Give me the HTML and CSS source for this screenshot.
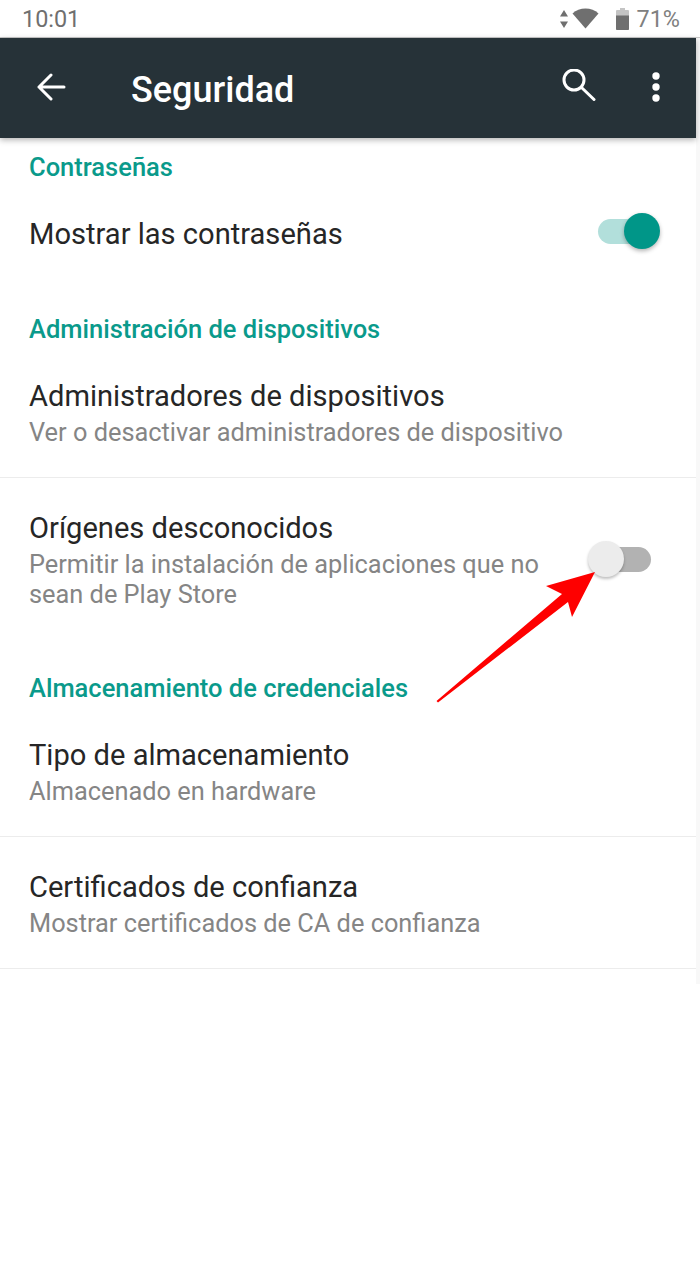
FILE: index.html
```html
<!DOCTYPE html>
<html lang="es">
<head>
<meta charset="utf-8">
<title>Seguridad</title>
<link rel="stylesheet" href="styles.css">
</head>
<body>
<div class="screen">
  <header class="statusbar">
    <span class="time">10:01</span>
    <div class="status-right">
      <svg class="ic-data" width="10" height="18" viewBox="0 0 10 18"><path d="M5 0l4 6.500H1zM5 18l-4-6.500h8z" fill="#6f6f6f"/></svg>
      <svg class="ic-wifi" width="27" height="21" viewBox="0 0 27 21"><path d="M13.500 20.500L.5 5.500C4 2.300 8.500.5 13.500.5s9.500 1.800 13 5z" fill="#6f6f6f"/></svg>
      <svg class="ic-batt" width="13" height="22" viewBox="0 0 13 22"><path d="M4 0h5v2h3a1 1 0 0 1 1 1v18a1 1 0 0 1-1 1H1a1 1 0 0 1-1-1V3a1 1 0 0 1 1-1h3z" fill="#c4c4c4"/><path d="M0 7.500h13V21a1 1 0 0 1-1 1H1a1 1 0 0 1-1-1z" fill="#6f6f6f"/></svg>
      <span class="batt">71%</span>
    </div>
  </header>
  <div class="body-wrap">
    <main class="main">
      <div class="toolbar">
        <svg class="ic-back" width="30" height="28" viewBox="0 0 30 28" fill="none" stroke="#fff" stroke-width="3" stroke-linecap="round" stroke-linejoin="round"><path d="M28 14H3M15 2L3 14l12 12"/></svg>
        <h1 class="title">Seguridad</h1>
        <svg class="ic-search" width="34" height="32" viewBox="0 0 34 32" fill="none" stroke="#fff" stroke-width="3" stroke-linecap="round"><circle cx="12" cy="11" r="10"/><path d="M19.500 18.500L32 30.500"/></svg>
        <svg class="ic-more" width="10" height="30" viewBox="0 0 10 30" fill="#fff"><circle cx="5" cy="4" r="3.700"/><circle cx="5" cy="15" r="3.700"/><circle cx="5" cy="26" r="3.700"/></svg>
      </div>

      <section class="section first">
        <h2 class="head">Contraseñas</h2>
        <div class="row row-single">
          <div class="text"><div class="t">Mostrar las contraseñas</div></div>
          <div class="toggle on"><span class="track"></span><span class="thumb"></span></div>
        </div>
      </section>

      <section class="section">
        <h2 class="head">Administración de dispositivos</h2>
        <div class="row">
          <div class="text">
            <div class="t">Administradores de dispositivos</div>
            <div class="s">Ver o desactivar administradores de dispositivo</div>
          </div>
        </div>
        <div class="row row-tall">
          <div class="text">
            <div class="t">Orígenes desconocidos</div>
            <div class="s">Permitir la instalación de aplicaciones que no sean de Play Store</div>
          </div>
          <div class="toggle off"><span class="track"></span><span class="thumb"></span></div>
        </div>
      </section>

      <section class="section">
        <h2 class="head">Almacenamiento de credenciales</h2>
        <div class="row">
          <div class="text">
            <div class="t">Tipo de almacenamiento</div>
            <div class="s">Almacenado en hardware</div>
          </div>
        </div>
        <div class="row last">
          <div class="text">
            <div class="t">Certificados de confianza</div>
            <div class="s">Mostrar certificados de CA de confianza</div>
          </div>
        </div>
      </section>
    </main>
    <div class="edge"></div>
  </div>
  <svg class="arrow" width="700" height="1280" viewBox="0 0 700 1280"><path d="M595 572L546 586L562 594L436.500 701L438 702.500L568 602L572 617Z" fill="#fe0000"/></svg>
</div>
</body>
</html>
```
FILE: styles.css
```css
* { box-sizing: border-box; }
html, body { margin: 0; padding: 0; background: #fff; }
body { font-family: Roboto, "Noto Sans", sans-serif; }
.screen { position: relative; width: 700px; height: 1280px; overflow: hidden; background: #fff; }

.statusbar {
  height: 38px;
  display: flex;
  align-items: center;
  justify-content: space-between;
  padding: 0 20px 0 22px;
  color: #6f6f6f;
  border-bottom: 1px solid #c9c9c9;
}
.time { font-size: 23.400px; line-height: 38px; }
.status-right { display: flex; align-items: center; }
.batt { font-size: 23.400px; line-height: 38px; margin-left: 8px; color: #808080; }
.ic-data { margin-right: 3px; }
.ic-wifi { margin-right: 17px; }

.body-wrap { display: flex; align-items: flex-start; }
.main { width: 696px; flex: none; }
.edge { width: 4px; height: 946px; background: #f8f8f8; }

.toolbar {
  height: 100px;
  background: #263238;
  display: flex;
  align-items: center;
  padding: 0 35px 0 36px;
  color: #fff;
  box-shadow: 0 2px 6px rgba(0, 0, 0, .3);
  position: relative;
}
.ic-back { margin-top: -3px; }
.title { flex: 1; margin: 4px 0 0 65px; font-size: 36px; font-weight: 500; line-height: 40px; }
.ic-search { margin-right: 55px; margin-top: -7px; }
.ic-more { margin-top: -3px; }

.section { padding-top: 30px; }
.section.first { padding-top: 11px; }
.head {
  margin: 0;
  padding: 0 29px 1px;
  font-size: 25.500px;
  font-weight: 500;
  line-height: 36px;
  color: #0a9a8b;
}
.row {
  display: flex;
  align-items: center;
  padding: 30px 36px 30px 29px;
}
.row + .row { border-top: 1px solid #ececec; padding-top: 32px; }
.row.row-tall { padding-bottom: 31px; }
.row.last { border-bottom: 1px solid #ececec; }
.row.row-single { height: 95px; padding-top: 0; padding-bottom: 0; }
.row-single .toggle { margin-top: -4px; }
.text { flex: 1; min-width: 0; }
.t { font-size: 29.100px; line-height: 36px; color: #262626; }
.s { font-size: 25.350px; line-height: 30px; margin-top: 3px; color: #858585; }

.toggle { position: relative; flex: none; width: 72px; height: 37px; }
.track { position: absolute; left: 10px; top: 6px; width: 53px; height: 25px; border-radius: 13px; }
.thumb { position: absolute; top: 0; width: 36px; height: 36px; border-radius: 50%; }
.on .track { background: #b2dfdb; }
.on .thumb { left: 36px; background: #009688; box-shadow: 0 2px 4px rgba(0, 0, 0, .3); }
.off .track { background: #b2b2b2; }
.off .thumb { left: 0; background: #ececec; box-shadow: 0 2px 3px rgba(0, 0, 0, .25); }

.arrow { position: absolute; left: 0; top: 0; pointer-events: none; }
```
